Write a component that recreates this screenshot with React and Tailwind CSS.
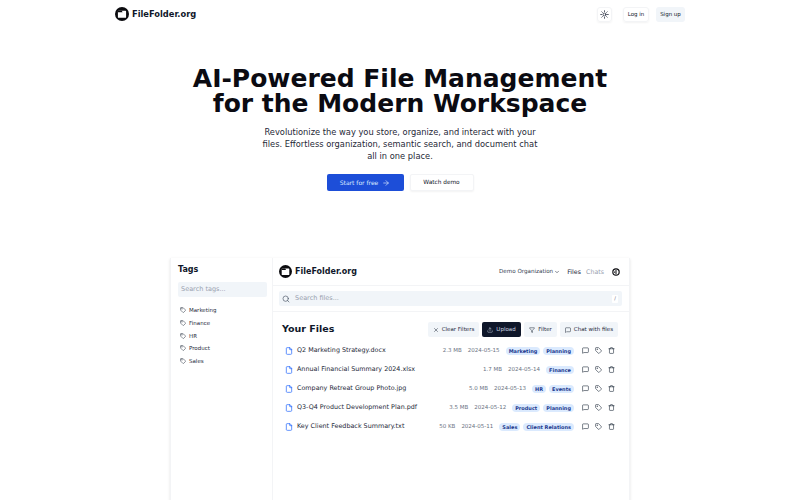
import React from 'react';
import { Sun, ArrowRight, Tag, Search, ChevronDown, X, Upload, Filter, MessageSquare, File, Trash } from 'lucide-react';

const FolderLogo = ({ className }) => (
  <svg viewBox="0 0 24 24" className={className}>
    <circle cx="12" cy="12" r="12" fill="#0b0b0f" />
    <path d="M5 7.5a1 1 0 0 1 1-1h12a1 1 0 0 1 1 1v10a1 1 0 0 1-1 1H6a1 1 0 0 1-1-1z" fill="#fff" />
    <path d="M5 6.5h6.5l1.5 2.5H5z" fill="#0b0b0f" />
  </svg>
);

const HelpMark = ({ className }) => (
  <svg viewBox="0 0 24 24" className={className} fill="none" stroke="#0b0b0f">
    <circle cx="12" cy="12" r="9.5" strokeWidth="3.5" />
    <path d="M12 6v12M8 10.5v4" strokeWidth="3" />
  </svg>
);

const files = [
  { name: 'Q2 Marketing Strategy.docx', size: '2.3 MB', date: '2024-05-15', tags: ['Marketing', 'Planning'] },
  { name: 'Annual Financial Summary 2024.xlsx', size: '1.7 MB', date: '2024-05-14', tags: ['Finance'] },
  { name: 'Company Retreat Group Photo.jpg', size: '5.0 MB', date: '2024-05-13', tags: ['HR', 'Events'] },
  { name: 'Q3-Q4 Product Development Plan.pdf', size: '3.5 MB', date: '2024-05-12', tags: ['Product', 'Planning'] },
  { name: 'Key Client Feedback Summary.txt', size: '50 KB', date: '2024-05-11', tags: ['Sales', 'Client Relations'] },
];

const sidebarTags = ['Marketing', 'Finance', 'HR', 'Product', 'Sales'];

const App = () => {
  return (
    <div className="h-[500px] w-[800px] overflow-hidden bg-white font-['DejaVu_Sans',sans-serif] text-[#0f172a]">
      {/* Header */}
      <header className="mx-auto flex h-[28px] w-[570px] items-center justify-between">
        <div className="flex items-center gap-[3px]">
          <FolderLogo className="h-[14px] w-[14px]" />
          <span className="text-[8.3px] font-bold">FileFolder.org</span>
        </div>
        <div className="flex items-center gap-[7px]">
          <button className="mr-[4px] flex h-[15px] w-[15px] items-center justify-center rounded-[3px] border border-gray-100 shadow-xs">
            <Sun className="h-[9px] w-[9px]" />
          </button>
          <button className="flex h-[15px] w-[26px] items-center justify-center rounded-[3px] border border-gray-100 text-[5.5px] shadow-xs">Log in</button>
          <button className="flex h-[15px] w-[29px] items-center justify-center rounded-[3px] bg-slate-100 text-[5.5px]">Sign up</button>
        </div>
      </header>

      {/* Hero */}
      <section className="flex flex-col items-center pt-[38px]">
        <h1 className="text-center text-[25px] font-bold leading-[25px] text-[#0b0b12]">
          AI-Powered File Management
          <br />
          for the Modern Workspace
        </h1>
        <p className="mt-[10px] w-[280px] text-center text-[8.3px] leading-[12px] text-[#1f2937]">
          Revolutionize the way you store, organize, and interact with your files. Effortless organization, semantic search, and document chat all in one place.
        </p>
        <div className="mt-[12px] flex gap-[6px]">
          <button className="flex h-[17px] w-[77px] items-center justify-center gap-[4px] rounded-[2px] bg-[#1d4ed8] text-[6px] text-blue-100">
            Start for free
            <ArrowRight className="h-[8px] w-[8px]" />
          </button>
          <button className="h-[17px] w-[64px] rounded-[2px] border border-gray-100 text-[5.8px] shadow-xs">Watch demo</button>
        </div>
      </section>

      {/* App preview */}
      <section className="mx-auto mt-[67px] flex h-[300px] w-[460px] gap-[1px] bg-gray-100 px-[1px] shadow-sm">
        <aside className="w-[101px] bg-white pl-[7px] pr-[5px] pt-[7px]">
          <h3 className="text-[8px] font-bold leading-[10px]">Tags</h3>
          <div className="mt-[7px] flex h-[15px] items-center rounded-[2px] bg-slate-100 px-[3px] text-[6.5px] text-gray-400">Search tags...</div>
          <ul className="mt-[7px] flex flex-col">
            {sidebarTags.map((tag) => (
              <li key={tag} className="flex h-[12.7px] items-center gap-[3px] px-[2px] text-[5.5px] text-gray-800">
                <Tag className="h-[6px] w-[6px]" />
                {tag}
              </li>
            ))}
          </ul>
        </aside>

        <main className="flex-1 bg-white">
          <div className="flex h-[28px] items-center justify-between border-b border-gray-100 pl-[6px] pr-[9px]">
            <div className="flex items-center gap-[3px]">
              <FolderLogo className="h-[13px] w-[13px]" />
              <span className="text-[8px] font-bold">FileFolder.org</span>
            </div>
            <div className="flex items-center">
              <span className="text-[5.6px] text-gray-700">Demo Organization</span>
              <ChevronDown className="ml-[1px] h-[6px] w-[6px]" />
              <span className="ml-[7px] text-[6.3px] text-gray-800">Files</span>
              <span className="ml-[5px] text-[6.3px] text-gray-400">Chats</span>
              <HelpMark className="ml-[8px] h-[8px] w-[8px]" />
            </div>
          </div>

          <div className="border-b border-gray-100 py-[5px] pl-[6px] pr-[7px]">
            <div className="flex h-[15px] items-center rounded-[2px] bg-slate-100 pl-[3px] pr-[4px]">
              <Search className="h-[8px] w-[8px] text-gray-600" />
              <span className="ml-[5px] flex-1 text-[6.5px] text-gray-400">Search files...</span>
              <span className="flex h-[8px] w-[6px] items-center justify-center rounded-[1px] bg-white text-[5px] text-gray-500">/</span>
            </div>
          </div>

          <div className="flex items-center justify-between pl-[9px] pr-[11px] pt-[10px]">
            <h2 className="text-[9.5px] font-bold">Your Files</h2>
            <div className="flex items-center gap-[3px] text-[5.5px] text-gray-800">
              <button className="flex h-[15px] w-[51px] items-center justify-center gap-[3px] rounded-[2px] bg-slate-100"><X className="h-[6px] w-[6px]" />Clear Filters</button>
              <button className="flex h-[15px] w-[39px] items-center justify-center gap-[3px] rounded-[2px] bg-[#0f172a] text-slate-300"><Upload className="h-[6px] w-[6px]" />Upload</button>
              <button className="flex h-[15px] w-[33px] items-center justify-center gap-[3px] rounded-[2px] bg-slate-100"><Filter className="h-[6px] w-[6px]" />Filter</button>
              <button className="flex h-[15px] w-[58px] items-center justify-center gap-[3px] rounded-[2px] bg-slate-100"><MessageSquare className="h-[6px] w-[6px]" />Chat with files</button>
            </div>
          </div>

          <ul className="mt-[4px] pl-[12px] pr-[14px]">
            {files.map((file) => (
              <li key={file.name} className="flex h-[19px] items-center">
                <File className="h-[8px] w-[8px] text-blue-600" />
                <span className="ml-[4px] text-[6.4px] text-gray-800">{file.name}</span>
                <div className="ml-auto flex items-center gap-[6px] text-[5.5px] text-gray-500">
                  <span>{file.size}</span>
                  <span>{file.date}</span>
                  <div className="flex gap-[3px]">
                    {file.tags.map((tag) => (
                      <span key={tag} className="rounded-full bg-blue-100 px-[3px] text-[5px] font-bold leading-[8px] text-blue-900">{tag}</span>
                    ))}
                  </div>
                  <div className="ml-[2px] flex gap-[6px] text-gray-800">
                    <MessageSquare className="h-[7px] w-[7px]" />
                    <Tag className="h-[7px] w-[7px]" />
                    <Trash className="h-[7px] w-[7px]" />
                  </div>
                </div>
              </li>
            ))}
          </ul>
        </main>
      </section>
    </div>
  );
};

export default App;
